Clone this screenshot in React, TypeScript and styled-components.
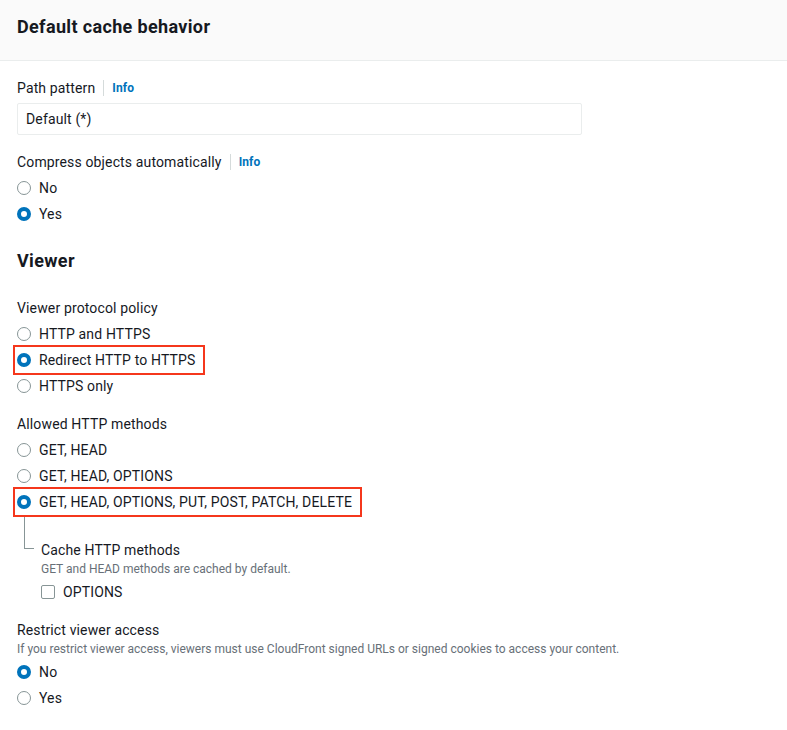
import React from "react";
import styled, { createGlobalStyle } from "styled-components";

const Global = createGlobalStyle`
  html, body { margin: 0; padding: 0; background: #fff; }
  body { font-family: Roboto, "Liberation Sans", Arial, sans-serif; color: #16191f; }
  * { box-sizing: border-box; }
`;

const Page = styled.div`
  width: 787px;
  min-height: 730px;
  background: #fff;
`;

const Header = styled.div`
  background: #fafafa;
  border-bottom: 1px solid #eaeded;
  height: 61px;
  padding: 16px 17px 0;
`;

const Title = styled.h2`
  margin: 0;
  font-size: 18px;
  line-height: 22px;
  font-weight: 700;
  letter-spacing: 0.35px;
  color: #16191f;
`;

const Body = styled.div`
  padding: 16px 17px 20px;
  display: flex;
  flex-direction: column;
`;

const Field = styled.div<{ $mt?: number }>`
  display: flex;
  flex-direction: column;
  margin-top: ${(p) => p.$mt ?? 0}px;
`;

const LabelRow = styled.div`
  display: flex;
  align-items: center;
  height: 22px;
  font-size: 14px;
  line-height: 22px;
  letter-spacing: 0.14px;
  color: #16191f;
`;

const InfoLink = styled.span`
  display: inline-flex;
  align-items: center;
  margin-left: 8px;
  padding-left: 8px;
  border-left: 1px solid #d5dbdb;
  height: 16px;
  font-size: 12px;
  font-weight: 700;
  letter-spacing: 0.1px;
  color: #0073bb;
`;

const Description = styled.div`
  font-size: 12px;
  line-height: 16px;
  color: #687078;
`;

const Input = styled.div`
  margin-top: 4px;
  width: 565px;
  height: 32px;
  border: 1px solid #eaeded;
  border-radius: 2px;
  padding: 0 8px;
  display: flex;
  align-items: center;
  font-size: 14px;
  letter-spacing: 0.14px;
  color: #16191f;
`;

const Options = styled.div`
  display: flex;
  flex-direction: column;
  align-items: flex-start;
  margin-top: 2px;
`;

const OptionRow = styled.div<{ $highlight?: boolean }>`
  position: relative;
  display: inline-flex;
  align-items: center;
  height: 26px;
  gap: 8px;
  font-size: 14px;
  letter-spacing: 0.14px;
  color: #16191f;
  &::before {
    content: "";
    display: ${(p) => (p.$highlight ? "block" : "none")};
    position: absolute;
    top: -2px;
    bottom: -2px;
    left: -4px;
    right: -10px;
    border: 2px solid #f5371c;
    pointer-events: none;
  }
`;

const RadioDot = styled.span<{ $checked?: boolean }>`
  width: 14px;
  height: 14px;
  border-radius: 50%;
  flex: none;
  background: #fff;
  border: ${(p) => (p.$checked ? "4px solid #0073bb" : "1.5px solid #879596")};
`;

const CheckBox = styled.span`
  width: 14px;
  height: 14px;
  border-radius: 2px;
  flex: none;
  border: 1.5px solid #879596;
  background: #fff;
`;

const SectionHeading = styled.h3`
  margin: 23px 0 0;
  font-size: 18px;
  line-height: 22px;
  font-weight: 700;
  letter-spacing: 0.35px;
  color: #16191f;
`;

const SubSection = styled.div`
  display: flex;
  padding-left: 7px;
`;

const Connector = styled.div`
  width: 10px;
  height: 34px;
  border-left: 1px solid #879596;
  border-bottom: 1px solid #879596;
  flex: none;
`;

const SubContent = styled.div`
  margin-left: 7px;
  padding-top: 24px;
  display: flex;
  flex-direction: column;
`;

type Opt = { label: string; checked?: boolean; highlight?: boolean };

const RadioGroup = ({ options }: { options: Opt[] }) => (
  <Options>
    {options.map((o) => (
      <OptionRow key={o.label} $highlight={o.highlight}>
        <RadioDot $checked={o.checked} />
        <span>{o.label}</span>
      </OptionRow>
    ))}
  </Options>
);

export default function App() {
  return (
    <Page>
      <Global />
      <Header>
        <Title>Default cache behavior</Title>
      </Header>
      <Body>
        <Field>
          <LabelRow>
            Path pattern<InfoLink>Info</InfoLink>
          </LabelRow>
          <Input>Default (*)</Input>
        </Field>

        <Field $mt={16}>
          <LabelRow>
            Compress objects automatically<InfoLink>Info</InfoLink>
          </LabelRow>
          <RadioGroup options={[{ label: "No" }, { label: "Yes", checked: true }]} />
        </Field>

        <SectionHeading>Viewer</SectionHeading>

        <Field $mt={25}>
          <LabelRow>Viewer protocol policy</LabelRow>
          <RadioGroup
            options={[
              { label: "HTTP and HTTPS" },
              { label: "Redirect HTTP to HTTPS", checked: true, highlight: true },
              { label: "HTTPS only" },
            ]}
          />
        </Field>

        <Field $mt={14}>
          <LabelRow>Allowed HTTP methods</LabelRow>
          <RadioGroup
            options={[
              { label: "GET, HEAD" },
              { label: "GET, HEAD, OPTIONS" },
              {
                label: "GET, HEAD, OPTIONS, PUT, POST, PATCH, DELETE",
                checked: true,
                highlight: true,
              },
            ]}
          />
          <SubSection>
            <Connector />
            <SubContent>
              <LabelRow>Cache HTTP methods</LabelRow>
              <Description>GET and HEAD methods are cached by default.</Description>
              <Options>
                <OptionRow>
                  <CheckBox />
                  <span>OPTIONS</span>
                </OptionRow>
              </Options>
            </SubContent>
          </SubSection>
        </Field>

        <Field $mt={14}>
          <LabelRow>Restrict viewer access</LabelRow>
          <Description>
            If you restrict viewer access, viewers must use CloudFront signed URLs or signed cookies to access your content.
          </Description>
          <RadioGroup options={[{ label: "No", checked: true }, { label: "Yes" }]} />
        </Field>
      </Body>
    </Page>
  );
}
